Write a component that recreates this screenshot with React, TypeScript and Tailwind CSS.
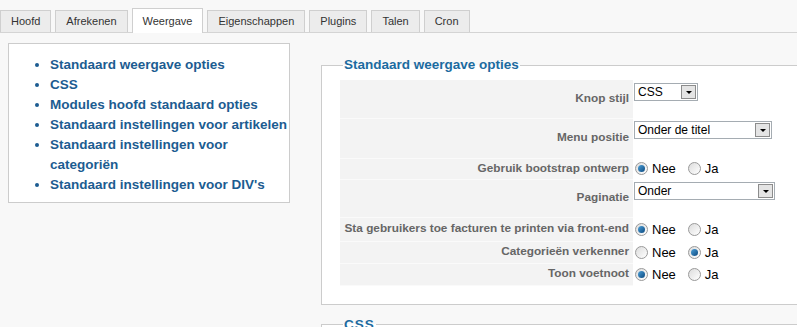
import React from "react";

const tabs = ["Hoofd", "Afrekenen", "Weergave", "Eigenschappen", "Plugins", "Talen", "Cron"];

const links = [
  "Standaard weergave opties",
  "CSS",
  "Modules hoofd standaard opties",
  "Standaard instellingen voor artikelen",
  "Standaard instellingen voor categoriën",
  "Standaard instellingen voor DIV's",
];

function Select({ value, width }: { value: string; width: string }) {
  return (
    <div className={`flex h-[18px] items-center border border-[#a5acb2] bg-white ${width}`}>
      <span className="flex-1 pl-[3px] text-[12px] leading-none text-black">{value}</span>
      <span className="mr-px flex h-[14px] w-[15px] items-center justify-center border border-[#8c8c8c] bg-[#e4e4e4]">
        <span className="h-0 w-0 border-x-[3px] border-t-[3px] border-x-transparent border-t-black" />
      </span>
    </div>
  );
}

function Radio({ checked }: { checked: boolean }) {
  return (
    <span className="flex h-[13px] w-[13px] items-center justify-center rounded-full border border-[#9a9a9a] bg-gradient-to-br from-[#dcdcdc] to-white">
      {checked && <span className="h-[7px] w-[7px] rounded-full bg-gradient-to-br from-[#4ca0d8] to-[#0b4a80]" />}
    </span>
  );
}

function YesNo({ yes }: { yes: boolean }) {
  return (
    <div className="flex items-center text-[13px] text-black">
      <Radio checked={!yes} />
      <span className="ml-[4px]">Nee</span>
      <span className="ml-[12px]">
        <Radio checked={yes} />
      </span>
      <span className="ml-[4px]">Ja</span>
    </div>
  );
}

const rows: { label: string; h: string; el: React.ReactNode; top?: boolean }[] = [
  { label: "Knop stijl", h: "h-[38px]", el: <Select value="CSS" width="w-[64px]" />, top: true },
  { label: "Menu positie", h: "h-[40px]", el: <Select value="Onder de titel" width="w-[138px]" />, top: true },
  { label: "Gebruik bootstrap ontwerp", h: "h-[21px]", el: <YesNo yes={false} /> },
  { label: "Paginatie", h: "h-[38px]", el: <Select value="Onder" width="w-[141px]" />, top: true },
  { label: "Sta gebruikers toe facturen te printen via front-end", h: "h-[24px]", el: <YesNo yes={false} /> },
  { label: "Categorieën verkenner", h: "h-[22px]", el: <YesNo yes={true} /> },
  { label: "Toon voetnoot", h: "h-[22px]", el: <YesNo yes={false} /> },
];

export default function App() {
  return (
    <div className="h-[327px] w-[797px] overflow-hidden bg-[#f8f8f8] font-['Liberation_Sans',Arial,sans-serif]">
      <div className="flex h-[33px] items-end gap-[4px] border-b border-[#d4d4d4]">
        {tabs.map((t) => (
          <div
            key={t}
            className={
              t === "Weergave"
                ? "relative -mb-px flex h-[25px] items-center border border-b-0 border-[#cfcfcf] bg-white px-[10px] text-[11px] text-[#333]"
                : "flex h-[22px] items-center border border-b-0 border-[#cfcfcf] bg-[#ececec] px-[10px] text-[11px] text-[#333]"
            }
          >
            {t}
          </div>
        ))}
      </div>

      <div className="flex">
        <div className="ml-[8px] mt-[10px] h-[160px] w-[282px] shrink-0 border border-[#cccccc] bg-white pl-[41px] pt-[11px]">
          <ul className="list-disc text-[13.5px] font-bold leading-[20px] text-[#1c5c91] marker:text-[#1c5c91]">
            {links.map((l) => (
              <li key={l}>{l}</li>
            ))}
          </ul>
        </div>

        <div className="ml-[31px] w-[520px] shrink-0">
          <fieldset className="mt-[22px] border border-[#cccccc] bg-white px-[18px] pb-[18px]">
            <legend className="ml-[3px] px-[1px] text-[13.5px] font-bold text-[#1c6ba0]">Standaard weergave opties</legend>
            <table className="mt-[5px] border-collapse">
              <tbody>
                {rows.map((r) => (
                  <tr key={r.label} className={r.h}>
                    <td className="w-[293px] whitespace-nowrap border-b border-[#fafafa] bg-[#f3f3f3] pr-[4px] text-right text-[11.8px] font-bold text-[#666]">
                      {r.label}
                    </td>
                    <td className={r.top ? "pl-[1px] pt-[3px] align-top" : "pl-[2px] align-middle"}>{r.el}</td>
                  </tr>
                ))}
              </tbody>
            </table>
          </fieldset>
          <fieldset className="mt-[10px] h-[40px] border border-[#cccccc] bg-white px-[18px]">
            <legend className="ml-[3px] px-[1px] text-[13.5px] font-bold tracking-[1px] text-[#1c6ba0]">CSS</legend>
          </fieldset>
        </div>
      </div>
    </div>
  );
}
